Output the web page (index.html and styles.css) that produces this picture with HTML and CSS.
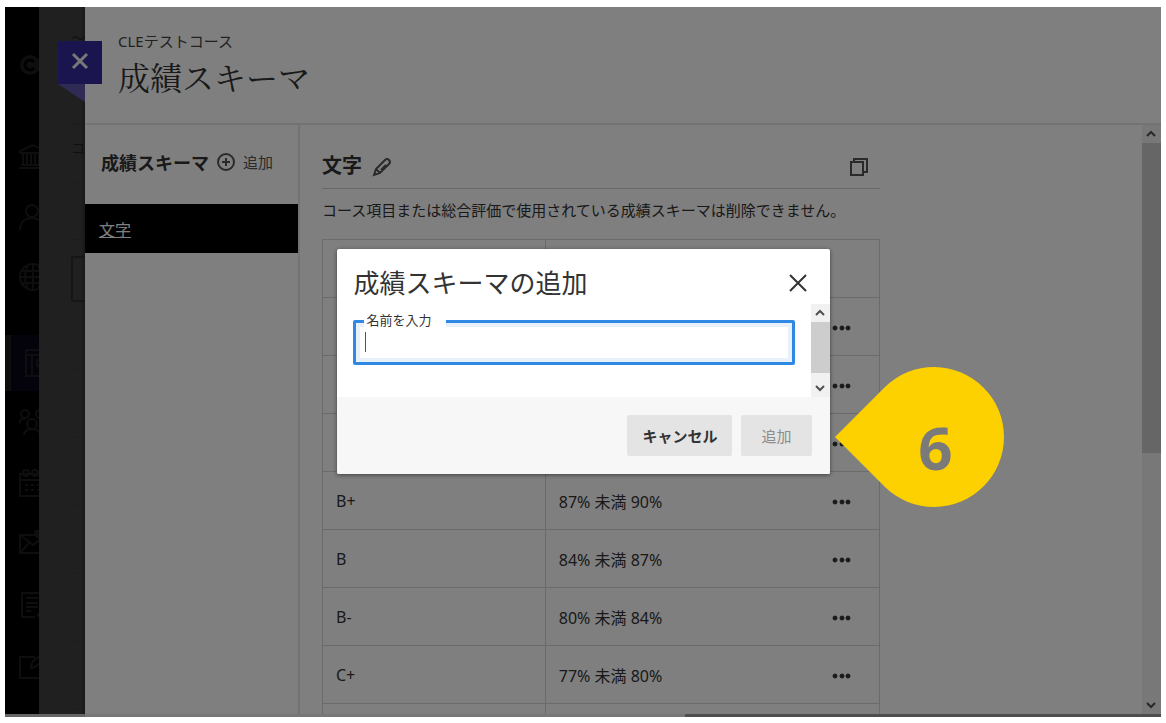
FILE: index.html
```
<!DOCTYPE html>
<html lang="ja">
<head>
  <meta charset="UTF-8" />
  <meta name="viewport" content="width=device-width, initial-scale=1.0" />
  <title>成績スキーマ</title>
  <link rel="stylesheet" href="styles.css">
</head>
<body>
  <div class="frame">
    <div class="app">
      <nav class="rail">
        <a href="#" class="rail-logo" aria-label="ホーム">
          <svg width="28" height="28" viewBox="0 0 28 28"><circle cx="13" cy="12" r="10" fill="#1c1c1c"/><path d="M17 9a5 5 0 1 0 0 6" stroke="#000" stroke-width="3"/></svg>
        </a>
        <a href="#" class="rail-item" aria-label="所属機関">
          <svg width="28" height="28" viewBox="0 0 28 28"><path d="M1 8 14 2l13 6v2H1zM4 10v12M8 10v12M12 10v12M16 10v12M20 10v12M24 10v12M2 22h24M0 25h28"/></svg>
        </a>
        <a href="#" class="rail-item" aria-label="プロフィール">
          <svg width="28" height="28" viewBox="0 0 28 28"><circle cx="13" cy="8" r="6"/><path d="M1 27c0-8 5-12 12-12s12 4 12 12"/></svg>
        </a>
        <a href="#" class="rail-item" aria-label="アクティビティ">
          <svg width="28" height="28" viewBox="0 0 28 28"><circle cx="14" cy="14" r="13"/><path d="M14 1v26M1 14h26M3 8h22M3 20h22M9 2c-4 8-4 16 0 24M19 2c4 8 4 16 0 24"/></svg>
        </a>
        <a href="#" class="rail-item active" aria-label="コース">
          <svg width="28" height="28" viewBox="0 0 28 28"><path d="M2 1h24v26H2zM2 6h24M8 6v21M13 11h8v6h-8z"/></svg>
        </a>
        <a href="#" class="rail-item" aria-label="組織">
          <svg width="28" height="28" viewBox="0 0 28 28"><circle cx="6" cy="6" r="4"/><circle cx="21" cy="6" r="4"/><circle cx="13" cy="16" r="5"/><path d="M0 16c0-4 3-6 7-5M27 16c0-4-3-6-7-5M5 27c0-4 4-6 8-6s8 2 8 6"/></svg>
        </a>
        <a href="#" class="rail-item" aria-label="カレンダー">
          <svg width="28" height="28" viewBox="0 0 28 28"><path d="M1 5h26v22H1zM1 11h26M6 16h3M12 16h3M18 16h3M6 21h3M12 21h3M18 21h3"/><circle cx="7" cy="4" r="3"/><circle cx="16" cy="4" r="3"/></svg>
        </a>
        <a href="#" class="rail-item" aria-label="メッセージ">
          <svg width="28" height="28" viewBox="0 0 28 28"><path d="M1 5h26v18H1zM1 5l13 10L27 5M1 23l9-10"/><circle cx="21" cy="3" r="5" fill="currentColor"/></svg>
        </a>
        <a href="#" class="rail-item" aria-label="成績">
          <svg width="28" height="28" viewBox="0 0 28 28"><path d="M16 26H3V2h20v14M7 7h12M7 12h12M7 16h12M7 20h5M18 26l5-8"/></svg>
        </a>
        <a href="#" class="rail-item" aria-label="ツール">
          <svg width="28" height="28" viewBox="0 0 28 28"><path d="M16 5H1v21h22V15M12 16c0-6 3-9 10-12l3 3c-4 5-7 8-13 9z"/></svg>
        </a>
      </nav>

      <div class="underlay">
        <div class="under-head">〜</div>
        <div class="under-tab">コ</div>
        <div class="under-row"></div>
        <div class="under-field"></div>
        <div class="under-list"></div>
        <div class="under-list"></div>
        <div class="under-list"></div>
        <div class="under-list"></div>
        <div class="under-list"></div>
        <div class="under-list"></div>
      </div>

      <section class="panel">
        <button type="button" class="panel-close" aria-label="閉じる">
          <svg width="44" height="62" viewBox="0 0 44 62"><path d="M0 43h27v18z" fill="#5e56aa"/><path d="M0 0h44v43H0z" fill="#342a9c"/><path d="m15 13 14 14M29 13 15 27" stroke="#f0f0f0" stroke-width="3"/></svg>
        </button>

        <header class="panel-header">
          <div class="course-name">CLEテストコース</div>
          <h1>成績スキーマ</h1>
        </header>

        <div class="panel-body">
          <aside class="sidebar">
            <div class="sidebar-head">
              <h2>成績スキーマ</h2>
              <button type="button" class="add-link">
                <svg width="18" height="18" viewBox="0 0 18 18"><circle cx="9" cy="9" r="8"/><path d="M9 5v8M5 9h8"/></svg>
                追加
              </button>
            </div>
            <a href="#" class="schema-item">文字</a>
          </aside>

          <main class="main">
            <div class="schema">
              <div class="schema-head">
                <h2>文字</h2>
                <button type="button" class="icon-btn" aria-label="編集">
                  <svg width="20" height="20" viewBox="0 0 20 20"><path d="m2 18 2-6 9-9q2-2 4 0t0 4l-9 9zM4 12l4 4M9 13l5-5"/></svg>
                </button>
                <button type="button" class="icon-btn copy" aria-label="コピー">
                  <svg width="20" height="20" viewBox="0 0 20 20"><path d="M2 5h12v13H2zM5 5V2h13v13h-4"/></svg>
                </button>
              </div>
              <p class="note">コース項目または総合評価で使用されている成績スキーマは削除できません。</p>

              <table class="grades">
                <thead>
                  <tr><th></th><th></th></tr>
                </thead>
                <tbody>
                  <tr><td></td><td><div class="range"><span></span><button type="button" class="more" aria-label="その他"><svg width="20" height="6" viewBox="0 0 20 6"><circle cx="4" cy="3" r="2"/><circle cx="11" cy="3" r="2"/><circle cx="17" cy="3" r="2"/></svg></button></div></td></tr>
                  <tr><td></td><td><div class="range"><span></span><button type="button" class="more" aria-label="その他"><svg width="20" height="6" viewBox="0 0 20 6"><circle cx="4" cy="3" r="2"/><circle cx="11" cy="3" r="2"/><circle cx="17" cy="3" r="2"/></svg></button></div></td></tr>
                  <tr><td></td><td><div class="range"><span></span><button type="button" class="more" aria-label="その他"><svg width="20" height="6" viewBox="0 0 20 6"><circle cx="4" cy="3" r="2"/><circle cx="11" cy="3" r="2"/><circle cx="17" cy="3" r="2"/></svg></button></div></td></tr>
                  <tr><td>B+</td><td><div class="range"><span>87% 未満 90%</span><button type="button" class="more" aria-label="その他"><svg width="20" height="6" viewBox="0 0 20 6"><circle cx="4" cy="3" r="2"/><circle cx="11" cy="3" r="2"/><circle cx="17" cy="3" r="2"/></svg></button></div></td></tr>
                  <tr><td>B</td><td><div class="range"><span>84% 未満 87%</span><button type="button" class="more" aria-label="その他"><svg width="20" height="6" viewBox="0 0 20 6"><circle cx="4" cy="3" r="2"/><circle cx="11" cy="3" r="2"/><circle cx="17" cy="3" r="2"/></svg></button></div></td></tr>
                  <tr><td>B-</td><td><div class="range"><span>80% 未満 84%</span><button type="button" class="more" aria-label="その他"><svg width="20" height="6" viewBox="0 0 20 6"><circle cx="4" cy="3" r="2"/><circle cx="11" cy="3" r="2"/><circle cx="17" cy="3" r="2"/></svg></button></div></td></tr>
                  <tr><td>C+</td><td><div class="range"><span>77% 未満 80%</span><button type="button" class="more" aria-label="その他"><svg width="20" height="6" viewBox="0 0 20 6"><circle cx="4" cy="3" r="2"/><circle cx="11" cy="3" r="2"/><circle cx="17" cy="3" r="2"/></svg></button></div></td></tr>
                  <tr><td></td><td></td></tr>
                </tbody>
              </table>
            </div>
          </main>

          <div class="scrollbar">
            <svg class="arrow" width="19" height="18" viewBox="0 0 19 18"><path d="m5 11 4-4 4 4"/></svg>
            <div class="thumb"></div>
            <svg class="arrow" width="19" height="18" viewBox="0 0 19 18"><path d="m5 7 4 4 4-4"/></svg>
          </div>
        </div>
      </section>
    </div>
    <div class="bottom-strip"></div>

    <div class="overlay">
      <div class="modal" role="dialog" aria-labelledby="modalTitle">
        <div class="modal-head">
          <h2 id="modalTitle">成績スキーマの追加</h2>
          <button type="button" class="modal-close" aria-label="閉じる">
            <svg width="20" height="20" viewBox="0 0 20 20"><path d="m2 2 16 16M18 2 2 18"/></svg>
          </button>
        </div>
        <div class="modal-body">
          <div class="field">
            <label for="schemaName">名前を入力</label>
            <input type="text" id="schemaName">
            <span class="caret"></span>
          </div>
          <div class="scrollbar">
            <svg class="arrow" width="19" height="18" viewBox="0 0 19 18"><path d="m5 11 4-4 4 4"/></svg>
            <div class="thumb"></div>
            <svg class="arrow" width="19" height="18" viewBox="0 0 19 18"><path d="m5 7 4 4 4-4"/></svg>
          </div>
        </div>
        <div class="modal-foot">
          <button type="button" class="btn">キャンセル</button>
          <button type="button" class="btn" disabled>追加</button>
        </div>

        <div class="callout">
          <svg width="170" height="141" viewBox="0 0 170 141"><path d="M0 71 50 21A70 70 0 1 1 50 121z" fill="#fdd000"/></svg>
          <span>6</span>
        </div>
      </div>
    </div>
  </div>
</body>
</html>
```
FILE: styles.css
```
* {
  box-sizing: border-box;
}

body {
  margin: 0;
  padding: 7px 5px 6px;
  height: 100vh;
  background: #fff;
  font-family: "Noto Sans", "Noto Sans CJK JP", sans-serif;
  font-size: 16px;
  color: #333;
}

h1, h2, p {
  margin: 0;
}

button {
  padding: 0;
  border: none;
  background: none;
  font-family: inherit;
  color: inherit;
  cursor: pointer;
}

svg {
  display: block;
  flex: none;
  fill: none;
  stroke: currentColor;
  stroke-width: 2;
}

.frame {
  position: relative;
  display: flex;
  flex-direction: column;
  height: 100%;
  overflow: hidden;
}

.app {
  flex: 1;
  display: flex;
  min-height: 0;
}

/* left navigation */
.rail {
  width: 34px;
  flex: none;
  background: #000;
  color: #1c1c1c;
  overflow: hidden;
}

.rail a {
  color: inherit;
}

.rail-logo {
  display: flex;
  align-items: center;
  height: 120px;
  padding-left: 12px;
}

.rail-logo svg {
  stroke: none;
}

.rail-item {
  display: flex;
  align-items: center;
  height: 60px;
  padding-left: 14px;
}

.rail-item.active {
  height: 56px;
  margin-top: 28px;
  padding-left: 13px;
  border-left: 6px solid #1c1c1c;
  background: #080618;
}

.rail-item.active ~ .rail-item {
  height: 61px;
}

/* course page behind the panel */
.underlay {
  width: 46px;
  flex: none;
  padding-left: 32px;
  overflow: hidden;
  background: linear-gradient(to right, #404040 42px, #323232);
  color: #222;
  font-size: 14px;
}

.under-head {
  height: 118px;
  padding-top: 20px;
  border-bottom: 2px solid #3a3a3a;
}

.under-tab {
  height: 58px;
  padding-top: 12px;
  border-bottom: 1px solid #3a3a3a;
}

.under-row {
  height: 57px;
  border-bottom: 1px solid #3a3a3a;
}

.under-field {
  width: 40px;
  height: 46px;
  margin-top: 16px;
  border: 2px solid #2c2c2c;
  border-radius: 2px;
}

.under-list {
  height: 68px;
  border-bottom: 1px solid #3a3a3a;
}

/* panel */
.panel {
  position: relative;
  flex: 1;
  min-width: 0;
  display: flex;
  flex-direction: column;
  background: #fff;
}

.panel-close {
  position: absolute;
  top: 34px;
  left: -27px;
}

.panel-close svg {
  stroke: none;
}

.panel-header {
  height: 118px;
  flex: none;
  padding: 22px 33px 0;
  border-bottom: 2px solid #e6e6e6;
}

.course-name {
  color: #444;
  font-size: 15px;
  line-height: 24px;
}

.panel-header h1 {
  font-family: "Liberation Serif", "Noto Serif CJK JP", "Noto Sans CJK JP", serif;
  font-size: 32px;
  font-weight: 400;
  line-height: 52px;
}

.panel-body {
  flex: 1;
  display: flex;
  min-height: 0;
}

.sidebar {
  width: 215px;
  flex: none;
  border-right: 2px solid #e6e6e6;
}

.sidebar-head {
  display: flex;
  align-items: center;
  gap: 8px;
  height: 79px;
  padding: 0 16px 6px;
}

.sidebar-head h2 {
  font-size: 18px;
}

.add-link {
  display: flex;
  align-items: center;
  gap: 8px;
  color: #555;
  font-size: 15px;
}

.schema-item {
  display: flex;
  align-items: center;
  height: 49px;
  padding-left: 14px;
  background: #000;
  color: #fff;
}

.add-link svg {
  stroke-width: 2;
}

.main {
  flex: 1;
  min-width: 0;
  overflow: hidden;
  padding: 16px 22px 0;
}

.schema {
  max-width: 558px;
}

.schema-head {
  display: flex;
  align-items: center;
  gap: 10px;
  height: 48px;
  padding-right: 11px;
  border-bottom: 1px solid #d2d2d2;
}

.schema-head h2 {
  font-size: 20px;
}

.icon-btn {
  padding-top: 4px;
  color: #555;
}

.icon-btn.copy {
  margin-left: auto;
}

.note {
  padding: 9px 0 17px;
  font-size: 15px;
  line-height: 24px;
  white-space: nowrap;
}

.grades {
  width: 100%;
  table-layout: fixed;
  border-collapse: collapse;
}

.grades th,
.grades td {
  height: 58px;
  padding: 0 13px;
  border: 1px solid #d6d6d6;
  text-align: left;
}

.grades th:first-child {
  width: 40%;
}

.range {
  display: flex;
  align-items: center;
  justify-content: space-between;
  padding-right: 15px;
}

.more {
  padding-top: 2px;
}

.more svg {
  fill: currentColor;
  stroke-width: 1;
}

/* scrollbars */
.scrollbar {
  display: flex;
  flex-direction: column;
  width: 19px;
  flex: none;
  background: #f1f1f1;
  color: #505050;
}

.scrollbar .thumb {
  height: 310px;
  background: #cdcdcd;
}

.scrollbar .arrow:last-child {
  margin-top: auto;
}

.bottom-strip {
  height: 3px;
  flex: none;
  background: linear-gradient(to right, #d0caca 80px, #eee 80px, #eee 680px, #9c9c9c 680px);
}

/* modal */
.overlay {
  position: absolute;
  inset: 0;
  display: flex;
  align-items: center;
  justify-content: center;
  padding-bottom: 2px;
  background: rgba(0, 0, 0, 0.5);
}

.modal {
  position: relative;
  width: 493px;
  max-width: 90%;
  background: #fff;
  border-radius: 2px;
  box-shadow: 0 1px 4px rgba(0, 0, 0, 0.5);
}

.modal-head {
  display: flex;
  align-items: center;
  justify-content: space-between;
  padding: 14px 22px 1px 17px;
}

.modal-head h2 {
  font-size: 26px;
  font-weight: 400;
  line-height: 40px;
}

.modal-body {
  display: flex;
  justify-content: space-between;
  height: 93px;
  padding-left: 16px;
}

.modal-body .thumb {
  height: 51px;
}

.field {
  position: relative;
  flex: 1;
  margin: 16px 16px 0 0;
}

.field label {
  position: absolute;
  top: -10px;
  left: 11px;
  padding: 0 14px 0 3px;
  background: #fff;
  font-size: 13px;
  line-height: 20px;
}

.field input {
  display: block;
  width: 100%;
  height: 45px;
  padding: 4px 12px 0;
  border: 3px solid #2f88e4;
  border-radius: 2px;
  box-shadow: inset 0 0 0 4px #e8f1fb;
  font: inherit;
  outline: none;
}

.caret {
  position: absolute;
  top: 12px;
  left: 12px;
  width: 1px;
  height: 20px;
  background: #555;
}

.modal-foot {
  display: flex;
  justify-content: flex-end;
  gap: 9px;
  padding: 18px;
  background: #f7f7f7;
  border-radius: 0 0 2px 2px;
}

.btn {
  height: 41px;
  padding: 0 15px;
  border-radius: 2px;
  background: #e4e4e4;
  font-size: 15px;
  font-weight: 700;
}

.btn:disabled {
  padding: 0 20px;
  color: #8c8c8c;
  font-weight: 400;
}

/* step marker */
.callout {
  position: absolute;
  top: 117px;
  left: calc(100% + 5px);
}

.callout svg {
  stroke: none;
}

.callout span {
  position: absolute;
  inset: 22px 0 0 32px;
  display: flex;
  align-items: center;
  justify-content: center;
  color: #7a7a7a;
  font-size: 60px;
  font-weight: 700;
  line-height: 1;
}
```
